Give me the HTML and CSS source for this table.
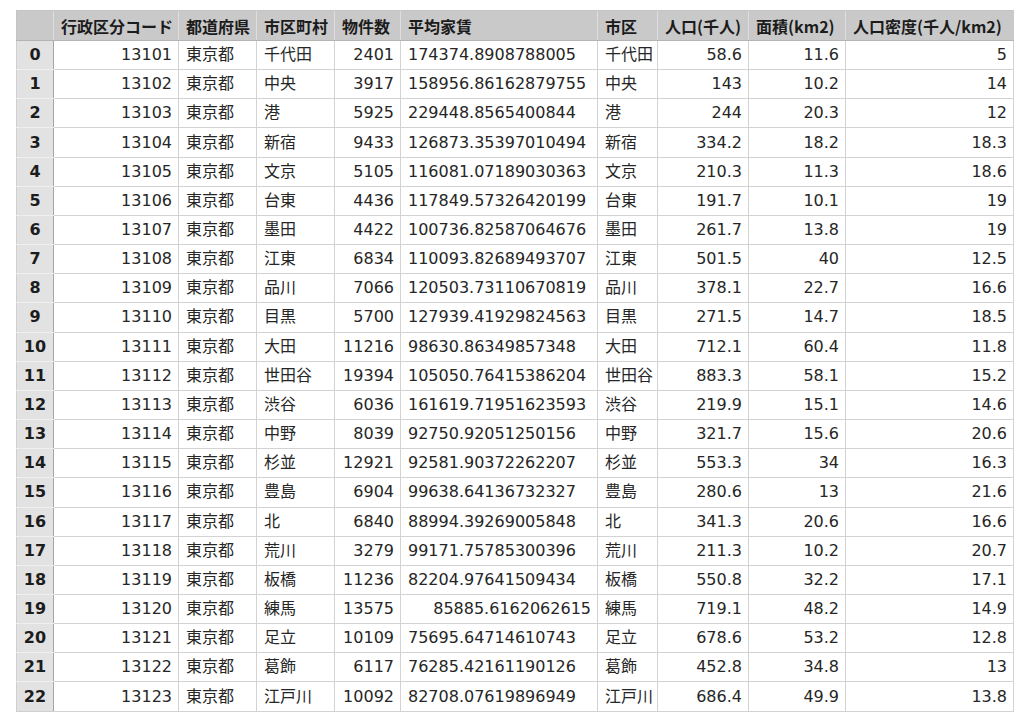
FILE: index.html
```html
<!DOCTYPE html>
<html lang="ja">
<head>
<meta charset="utf-8">
<title>東京都 家賃データ</title>
<link rel="stylesheet" href="styles.css">
</head>
<body>
<table class="df">
<colgroup>
<col class="c-idx"><col class="c-code"><col class="c-pref"><col class="c-city"><col class="c-cnt"><col class="c-rent"><col class="c-ward"><col class="c-pop"><col class="c-area"><col class="c-dens">
</colgroup>
<thead>
<tr><th class="corner"></th><th>行政区分コード</th><th>都道府県</th><th>市区町村</th><th>物件数</th><th>平均家賃</th><th>市区</th><th>人口(千人)</th><th>面積(km2)</th><th>人口密度(千人/km2)</th></tr>
</thead>
<tbody>
<tr><th class="idx">0</th><td class="n">13101</td><td>東京都</td><td>千代田</td><td class="n">2401</td><td>174374.8908788005</td><td>千代田</td><td class="n">58.6</td><td class="n">11.6</td><td class="n">5</td></tr>
<tr><th class="idx">1</th><td class="n">13102</td><td>東京都</td><td>中央</td><td class="n">3917</td><td>158956.86162879755</td><td>中央</td><td class="n">143</td><td class="n">10.2</td><td class="n">14</td></tr>
<tr><th class="idx">2</th><td class="n">13103</td><td>東京都</td><td>港</td><td class="n">5925</td><td>229448.8565400844</td><td>港</td><td class="n">244</td><td class="n">20.3</td><td class="n">12</td></tr>
<tr><th class="idx">3</th><td class="n">13104</td><td>東京都</td><td>新宿</td><td class="n">9433</td><td>126873.35397010494</td><td>新宿</td><td class="n">334.2</td><td class="n">18.2</td><td class="n">18.3</td></tr>
<tr><th class="idx">4</th><td class="n">13105</td><td>東京都</td><td>文京</td><td class="n">5105</td><td>116081.07189030363</td><td>文京</td><td class="n">210.3</td><td class="n">11.3</td><td class="n">18.6</td></tr>
<tr><th class="idx">5</th><td class="n">13106</td><td>東京都</td><td>台東</td><td class="n">4436</td><td>117849.57326420199</td><td>台東</td><td class="n">191.7</td><td class="n">10.1</td><td class="n">19</td></tr>
<tr><th class="idx">6</th><td class="n">13107</td><td>東京都</td><td>墨田</td><td class="n">4422</td><td>100736.82587064676</td><td>墨田</td><td class="n">261.7</td><td class="n">13.8</td><td class="n">19</td></tr>
<tr><th class="idx">7</th><td class="n">13108</td><td>東京都</td><td>江東</td><td class="n">6834</td><td>110093.82689493707</td><td>江東</td><td class="n">501.5</td><td class="n">40</td><td class="n">12.5</td></tr>
<tr><th class="idx">8</th><td class="n">13109</td><td>東京都</td><td>品川</td><td class="n">7066</td><td>120503.73110670819</td><td>品川</td><td class="n">378.1</td><td class="n">22.7</td><td class="n">16.6</td></tr>
<tr><th class="idx">9</th><td class="n">13110</td><td>東京都</td><td>目黒</td><td class="n">5700</td><td>127939.41929824563</td><td>目黒</td><td class="n">271.5</td><td class="n">14.7</td><td class="n">18.5</td></tr>
<tr><th class="idx">10</th><td class="n">13111</td><td>東京都</td><td>大田</td><td class="n">11216</td><td>98630.86349857348</td><td>大田</td><td class="n">712.1</td><td class="n">60.4</td><td class="n">11.8</td></tr>
<tr><th class="idx">11</th><td class="n">13112</td><td>東京都</td><td>世田谷</td><td class="n">19394</td><td>105050.76415386204</td><td>世田谷</td><td class="n">883.3</td><td class="n">58.1</td><td class="n">15.2</td></tr>
<tr><th class="idx">12</th><td class="n">13113</td><td>東京都</td><td>渋谷</td><td class="n">6036</td><td>161619.71951623593</td><td>渋谷</td><td class="n">219.9</td><td class="n">15.1</td><td class="n">14.6</td></tr>
<tr><th class="idx">13</th><td class="n">13114</td><td>東京都</td><td>中野</td><td class="n">8039</td><td>92750.92051250156</td><td>中野</td><td class="n">321.7</td><td class="n">15.6</td><td class="n">20.6</td></tr>
<tr><th class="idx">14</th><td class="n">13115</td><td>東京都</td><td>杉並</td><td class="n">12921</td><td>92581.90372262207</td><td>杉並</td><td class="n">553.3</td><td class="n">34</td><td class="n">16.3</td></tr>
<tr><th class="idx">15</th><td class="n">13116</td><td>東京都</td><td>豊島</td><td class="n">6904</td><td>99638.64136732327</td><td>豊島</td><td class="n">280.6</td><td class="n">13</td><td class="n">21.6</td></tr>
<tr><th class="idx">16</th><td class="n">13117</td><td>東京都</td><td>北</td><td class="n">6840</td><td>88994.39269005848</td><td>北</td><td class="n">341.3</td><td class="n">20.6</td><td class="n">16.6</td></tr>
<tr><th class="idx">17</th><td class="n">13118</td><td>東京都</td><td>荒川</td><td class="n">3279</td><td>99171.75785300396</td><td>荒川</td><td class="n">211.3</td><td class="n">10.2</td><td class="n">20.7</td></tr>
<tr><th class="idx">18</th><td class="n">13119</td><td>東京都</td><td>板橋</td><td class="n">11236</td><td>82204.97641509434</td><td>板橋</td><td class="n">550.8</td><td class="n">32.2</td><td class="n">17.1</td></tr>
<tr><th class="idx">19</th><td class="n">13120</td><td>東京都</td><td>練馬</td><td class="n">13575</td><td class="n">85885.6162062615</td><td>練馬</td><td class="n">719.1</td><td class="n">48.2</td><td class="n">14.9</td></tr>
<tr><th class="idx">20</th><td class="n">13121</td><td>東京都</td><td>足立</td><td class="n">10109</td><td>75695.64714610743</td><td>足立</td><td class="n">678.6</td><td class="n">53.2</td><td class="n">12.8</td></tr>
<tr><th class="idx">21</th><td class="n">13122</td><td>東京都</td><td>葛飾</td><td class="n">6117</td><td>76285.42161190126</td><td>葛飾</td><td class="n">452.8</td><td class="n">34.8</td><td class="n">13</td></tr>
<tr><th class="idx">22</th><td class="n">13123</td><td>東京都</td><td>江戸川</td><td class="n">10092</td><td>82708.07619896949</td><td>江戸川</td><td class="n">686.4</td><td class="n">49.9</td><td class="n">13.8</td></tr>
</tbody>
</table>
</body>
</html>
```

FILE: styles.css
```css
html, body {
  margin: 0;
  background: #ffffff;
}
body {
  padding: 10px 11px 0 16px;
  font-family: "DejaVu Sans", "Noto Sans CJK JP", sans-serif;
  font-size: 16px;
  color: #262626;
}
.df {
  width: 997px;
  table-layout: fixed;
  border-collapse: collapse;
}
.c-idx { width: 37px; }
.c-code { width: 125px; }
.c-pref { width: 78px; }
.c-city { width: 78px; }
.c-cnt { width: 66px; }
.c-rent { width: 197px; }
.c-ward { width: 60px; }
.c-pop { width: 91px; }
.c-area { width: 97px; }
.c-dens { width: 168px; }

.df th, .df td {
  padding: 0 6px 0 7px;
  white-space: nowrap;
  overflow: hidden;
  box-sizing: border-box;
  line-height: 20px;
}
.df thead tr { height: 30px; }
.df tbody tr { height: 29.17px; }

.df thead th {
  background: #c9c9c9;
  color: #1c1c1c;
  font-family: "Noto Sans CJK JP", sans-serif;
  font-weight: 700;
  text-align: left;
  border-left: 1px solid #dedede;
  border-top: 1px solid #c4c4c4;
  border-bottom: 1px solid #b4b4b4;
}
.df thead th.corner {
  border-left: 1px solid #c4c4c4;
}
.df td {
  border: 1px solid #d3d3d3;
  text-align: left;
}
.df td.n { text-align: right; }
.df th.idx {
  background: #e2e2e2;
  color: #1c1c1c;
  text-align: center;
  font-weight: 700;
  padding: 0;
  border-left: 1px solid #cfcfcf;
  border-right: 1px solid #a6a6a6;
  border-top: 1px solid #efefef;
  border-bottom: 1px solid #efefef;
}
.df tbody tr:last-child th.idx { border-bottom: 1px solid #cfcfcf; }
```
